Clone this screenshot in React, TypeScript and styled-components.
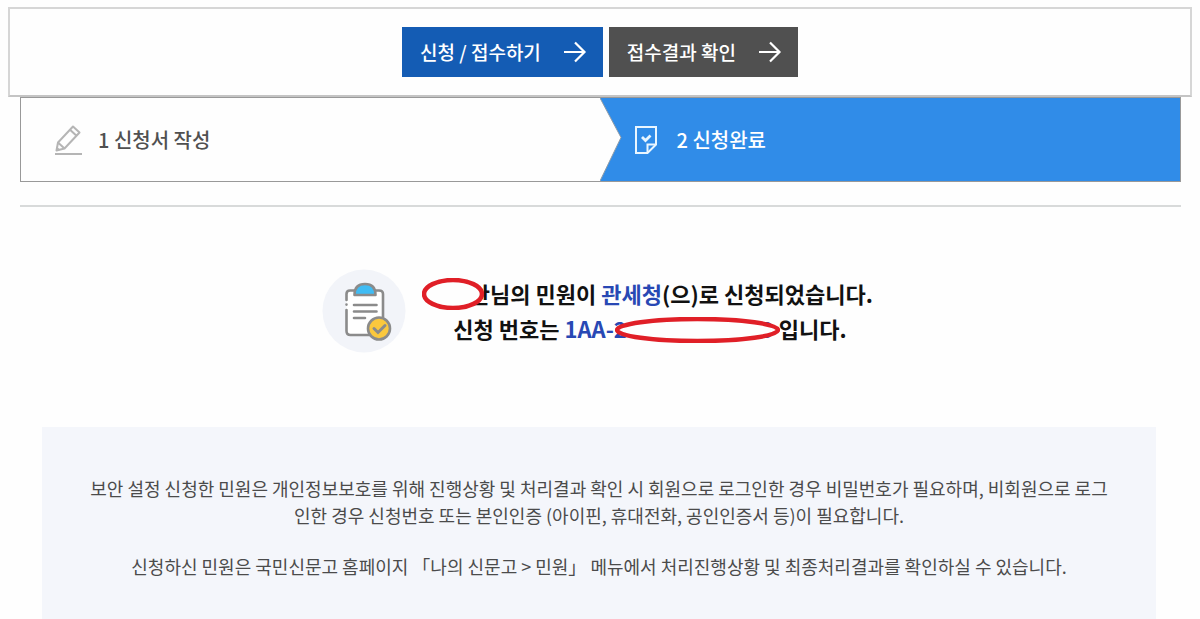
import React from "react";
import styled, { createGlobalStyle } from "styled-components";

const GlobalStyle = createGlobalStyle`
  *, *::before, *::after { box-sizing: border-box; }
  body {
    margin: 0;
    background: #fefefe;
    color: #111;
    font-family: "Noto Sans CJK KR", "Noto Sans", sans-serif;
  }
  p, h1, ol { margin: 0; padding: 0; }
`;

const Page = styled.div`
  padding: 7px 8px 0;
`;

const ActionBar = styled.nav`
  display: flex;
  justify-content: center;
  gap: 6px;
  padding: 18px 0;
  border: 2px solid #d6d6d6;
  border-bottom-color: #c4c4c4;
`;

const ActionButton = styled.button<{ $tone: string }>`
  display: flex;
  align-items: center;
  gap: 22px;
  height: 50px;
  padding: 0 16px 0 18px;
  border: 0;
  background: ${(p) => p.$tone};
  color: #fff;
  font-family: inherit;
  font-size: 19px;
  font-weight: 500;
  line-height: 28px;
  cursor: pointer;
`;

const Content = styled.main`
  margin: 0 11px 0 12px;
`;

const Steps = styled.ol`
  display: grid;
  grid-template-columns: 1fr calc(50% + 1px);
  height: 85px;
  border: 1px solid #999;
  list-style: none;
`;

const Step = styled.li<{ $active?: boolean }>`
  position: relative;
  display: flex;
  align-items: center;
  gap: 15px;
  padding-left: 34px;
  background: ${(p) => (p.$active ? "#308ce8" : "#fefefe")};
  color: ${(p) => (p.$active ? "#fff" : "#505050")};
  font-size: 20px;
  font-weight: 500;
  line-height: 30px;
`;

const StepArrow = styled.svg`
  position: absolute;
  top: 0;
  left: 0;
  width: 22px;
  height: 100%;
`;

const Result = styled.section`
  display: flex;
  justify-content: center;
  align-items: center;
  gap: 21px;
  margin-top: 23px;
  padding: 62px 6px 74px 0;
  border-top: 2px solid #d8dada;
`;

const Message = styled.h1`
  font-size: 22px;
  font-weight: 700;
  line-height: 35px;
  text-align: center;
`;

const Accent = styled.span`
  color: #2848b4;
`;

const Masked = styled.span<{ $width: number }>`
  position: relative;
  display: inline-block;
  width: ${(p) => p.$width}px;
  text-align: right;
`;

const Oval = styled.svg<{ $left: number; $top: number }>`
  position: absolute;
  left: ${(p) => p.$left}px;
  top: ${(p) => p.$top}px;
`;

const Notice = styled.section`
  display: flex;
  flex-direction: column;
  gap: 24px;
  margin: 0 25px 0 22px;
  padding: 48px 46px 40px;
  background: #f4f6fb;
  color: #4b4b4b;
  font-size: 18px;
  line-height: 27px;
  text-align: center;
`;

const ArrowIcon = () => (
  <svg width="24" height="24" viewBox="0 0 24 24" fill="none" stroke="#fff" strokeWidth="2.2" aria-hidden="true">
    <path d="M1 12H21M12 2.5L21.5 12L12 21.5" />
  </svg>
);

const PencilIcon = () => (
  <svg width="28" height="30" viewBox="0 0 28 30" fill="none" stroke="#b5b5b5" strokeWidth="2" aria-hidden="true">
    <path d="M1.5 25.5L3 17.5L18 1.5L24.5 7.5L9.5 23.5ZM3 17.5L9.5 23.5M15 4.8L21.5 10.8" strokeLinejoin="round" />
    <path d="M1 26L1.8 21.5L5.5 25Z" fill="#b5b5b5" stroke="none" />
    <path d="M0 29H27" />
  </svg>
);

const DocumentIcon = () => (
  <svg width="28" height="30" viewBox="0 0 28 30" fill="none" stroke="#e9f6ff" strokeWidth="2" aria-hidden="true">
    <path d="M2 2H22V19.5L13.5 28H2Z" />
    <path d="M13.5 28V19.5H22" />
    <path d="M8 12L11.500 15.500L16.500 10.500" strokeWidth="2.800" />
  </svg>
);

const ClipboardIcon = () => (
  <svg width="84" height="84" viewBox="0 0 84 84" fill="none" stroke="#8b8b8b" strokeWidth="2.6" strokeLinecap="round" aria-hidden="true">
    <circle cx="42" cy="42" r="41.5" fill="#f2f4f9" stroke="none" />
    <path d="M24.500 29V24Q24.500 21.500 27 21.500H57.500Q61 21.500 61 25V64Q61 67 58 67H29Q24.500 67 24.500 63Z" fill="#fff" stroke="none" />
    <path d="M24.500 31V25Q24.500 21.500 28 21.500H32M53 21.500H57Q61 21.500 61 25V50M24.500 41V62Q24.500 66 28.500 66H48M24.500 35.500V35.600" />
    <path d="M32.500 26Q32.500 15 43 15Q53.500 15 53.500 26Z" fill="#40bcf4" strokeLinejoin="round" />
    <path d="M32 36H54.500M32 42.500H54.500M32 49H43" />
    <circle cx="57" cy="59.500" r="11" fill="#fbc83d" />
    <path d="M52 59.500L56 63.500L63 56.500" strokeWidth="3" />
  </svg>
);

interface RedOvalProps {
  width: number;
  height: number;
  left: number;
  top: number;
}

const RedOval = ({ width, height, left, top }: RedOvalProps) => (
  <Oval width={width} height={height} $left={left} $top={top} aria-hidden="true">
    <ellipse
      cx={width / 2}
      cy={height / 2}
      rx={width / 2 - 2}
      ry={height / 2 - 2}
      fill="#fefefe"
      stroke="#e01f27"
      strokeWidth="4.500"
    />
  </Oval>
);

export default function App() {
  return (
    <>
      <GlobalStyle />
      <Page>
        <ActionBar>
          <ActionButton type="button" $tone="#145cb4">
            신청 / 접수하기
            <ArrowIcon />
          </ActionButton>
          <ActionButton type="button" $tone="#505050">
            접수결과 확인
            <ArrowIcon />
          </ActionButton>
        </ActionBar>
        <Content>
          <Steps>
            <Step>
              <PencilIcon />
              <span>1 신청서 작성</span>
            </Step>
            <Step $active aria-current="step">
              <StepArrow viewBox="0 0 22 84" preserveAspectRatio="none" aria-hidden="true">
                <path d="M0 0L21 40L0 84Z" fill="#fefefe" />
                <path d="M0 0L21 40L0 84" fill="none" stroke="#8f9ba6" />
              </StepArrow>
              <DocumentIcon />
              <span>2 신청완료</span>
            </Step>
          </Steps>
          <Result>
            <ClipboardIcon />
            <Message>
              <Masked $width={63}>
                안
                <RedOval width={62} height={32} left={-5} top={2} />
              </Masked>
              님의 민원이 <Accent>관세청</Accent>(으)로 신청되었습니다.
              <br />
              신청 번호는 <Accent>1AA-2</Accent>
              <Masked $width={147}>
                <Accent>9</Accent>
                <RedOval width={165} height={26} left={-12} top={6} />
              </Masked>{" "}
              입니다.
            </Message>
          </Result>
          <Notice>
            <p>
              보안 설정 신청한 민원은 개인정보보호를 위해 진행상황 및 처리결과 확인 시 회원으로 로그인한 경우
              비밀번호가 필요하며, 비회원으로 로그인한 경우 신청번호 또는 본인인증 (아이핀, 휴대전화, 공인인증서
              등)이 필요합니다.
            </p>
            <p>
              신청하신 민원은 국민신문고 홈페이지 「나의 신문고 &gt; 민원」 메뉴에서 처리진행상황 및 최종처리결과를
              확인하실 수 있습니다.
            </p>
          </Notice>
        </Content>
      </Page>
    </>
  );
}
